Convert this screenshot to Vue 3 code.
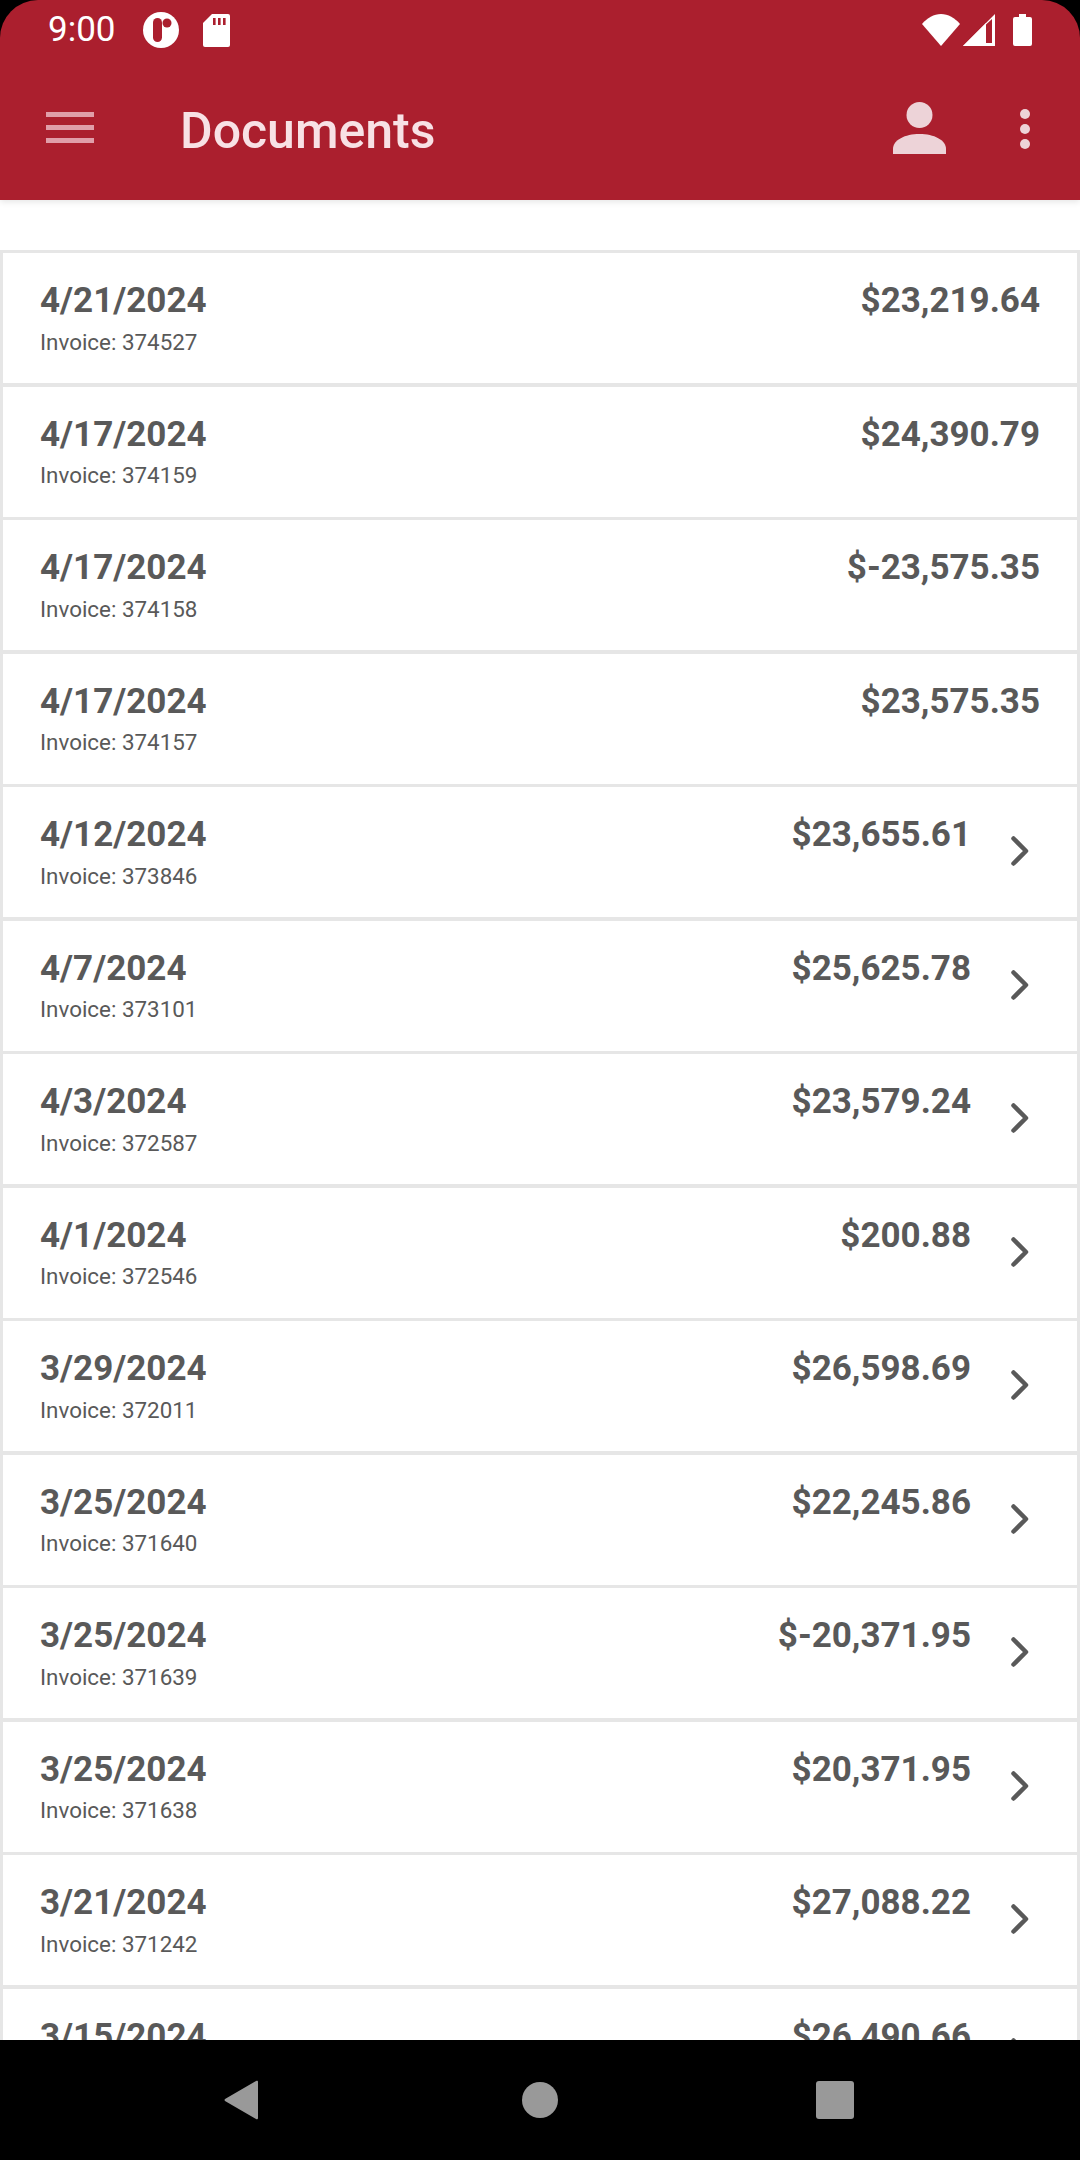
<script setup>
const rows = [
  { date: '4/21/2024', invoice: '374527', amount: '$23,219.64', open: false },
  { date: '4/17/2024', invoice: '374159', amount: '$24,390.79', open: false },
  { date: '4/17/2024', invoice: '374158', amount: '$-23,575.35', open: false },
  { date: '4/17/2024', invoice: '374157', amount: '$23,575.35', open: false },
  { date: '4/12/2024', invoice: '373846', amount: '$23,655.61', open: true },
  { date: '4/7/2024', invoice: '373101', amount: '$25,625.78', open: true },
  { date: '4/3/2024', invoice: '372587', amount: '$23,579.24', open: true },
  { date: '4/1/2024', invoice: '372546', amount: '$200.88', open: true },
  { date: '3/29/2024', invoice: '372011', amount: '$26,598.69', open: true },
  { date: '3/25/2024', invoice: '371640', amount: '$22,245.86', open: true },
  { date: '3/25/2024', invoice: '371639', amount: '$-20,371.95', open: true },
  { date: '3/25/2024', invoice: '371638', amount: '$20,371.95', open: true },
  { date: '3/21/2024', invoice: '371242', amount: '$27,088.22', open: true },
  { date: '3/15/2024', invoice: '370811', amount: '$26,490.66', open: true }
]
</script>

<template>
  <div class="screen">
    <header class="head">
      <div class="status">
        <span class="time">9:00</span>
        <svg class="st-app" viewBox="0 0 36 36">
          <circle cx="18" cy="18" r="18" fill="#fff" />
          <rect x="10" y="6" width="9" height="24" rx="4.500" fill="#ab1f2e" />
          <circle cx="24" cy="11" r="4.500" fill="#ab1f2e" />
        </svg>
        <svg class="st-sd" viewBox="0 0 27 33">
          <path d="M9 0h16a2 2 0 0 1 2 2v29a2 2 0 0 1-2 2H2a2 2 0 0 1-2-2V9z" fill="#fff" />
          <rect x="10" y="4" width="2.600" height="7" fill="#ab1f2e" />
          <rect x="15" y="4" width="2.600" height="7" fill="#ab1f2e" />
          <rect x="20" y="4" width="2.600" height="7" fill="#ab1f2e" />
        </svg>
        <span class="grow"></span>
        <svg class="st-wifi" viewBox="0 0 38 32">
          <path d="M0 10C5 4 12 0 19 0s14 4 19 10L19 32z" fill="#fff" />
        </svg>
        <svg class="st-signal" viewBox="0 0 32 32">
          <path d="M0 32 32 0v32z" fill="#fff" />
          <path d="M23 10.500 29 5v24h-6z" fill="#ab1f2e" />
          <path d="M0 32 23 9v23z" fill="#fff" />
        </svg>
        <svg class="st-batt" viewBox="0 0 19 32">
          <path d="M6 0h7v3h4a2 2 0 0 1 2 2v25a2 2 0 0 1-2 2H2a2 2 0 0 1-2-2V5a2 2 0 0 1 2-2h4z" fill="#fff" />
        </svg>
      </div>
      <div class="bar">
        <div class="burger"><i></i><i></i><i></i></div>
        <h1 class="title">Documents</h1>
        <svg class="person" viewBox="0 0 53 52">
          <circle cx="26.500" cy="13" r="13" fill="#edd3d8" />
          <path d="M0 52v-5C0 38 12 32 26.500 32S53 38 53 47v5z" fill="#edd3d8" />
        </svg>
        <div class="dots"><i></i><i></i><i></i></div>
      </div>
    </header>

    <main class="list">
      <div class="cards">
        <article v-for="row in rows" :key="row.invoice" class="row">
          <div class="left">
            <div class="date">{{ row.date }}</div>
            <div class="invoice">Invoice: {{ row.invoice }}</div>
          </div>
          <div class="amount">{{ row.amount }}</div>
          <svg v-if="row.open" class="chev" viewBox="0 0 18 30">
            <path d="M2.500 2.500 15 15 2.500 27.500" fill="none" stroke="#595959" stroke-width="4.500" stroke-linecap="round" stroke-linejoin="round" />
          </svg>
        </article>
      </div>
    </main>

    <nav class="nav">
      <svg class="n-back" viewBox="0 0 34 40">
        <path d="M32 1 1 19a1.500 1.500 0 0 0 0 2l31 18a1.200 1.200 0 0 0 2-1V2a1.200 1.200 0 0 0-2-1z" fill="#999" />
      </svg>
      <span class="n-home"></span>
      <span class="n-rec"></span>
    </nav>
  </div>
</template>

<style>
html, body { margin: 0; background: #000; }
</style>

<style scoped>
.screen {
  width: 1080px;
  height: 2160px;
  display: flex;
  flex-direction: column;
  background: #000;
  overflow: hidden;
  font-family: Roboto, "Liberation Sans", sans-serif;
}
.head {
  flex: none;
  height: 200px;
  background: #ab1f2e;
  border-radius: 38px 38px 0 0;
  position: relative;
  z-index: 1;
  box-shadow: 0 2px 6px rgba(0, 0, 0, 0.1);
}
.status {
  height: 60px;
  display: flex;
  align-items: center;
  padding: 0 48px;
  color: #fff;
}
.time { font-size: 35px; line-height: 62px; width: 95px; }
.st-app { width: 36px; height: 36px; margin-right: 24px; }
.st-sd { width: 27px; height: 33px; }
.grow { flex: 1; }
.st-wifi { width: 38px; height: 32px; margin-right: 3px; }
.st-signal { width: 32px; height: 32px; margin-right: 18px; }
.st-batt { width: 19px; height: 32px; }
.bar {
  height: 140px;
  display: flex;
  align-items: center;
  padding-left: 46px;
}
.burger {
  width: 48px;
  display: flex;
  flex-direction: column;
  gap: 8px;
  margin-top: -6px;
}
.burger i { display: block; height: 5px; background: #e09ea9; }
.title {
  margin: 2px 0 0 86px;
  font-size: 50px;
  font-weight: 500;
  color: #f8e1e5;
  flex: 1;
}
.person { width: 53px; height: 52px; margin-top: -4px; margin-right: 74px; }
.dots {
  width: 10px;
  display: flex;
  flex-direction: column;
  gap: 5px;
  margin-top: -2px;
  margin-right: 50px;
}
.dots i { display: block; width: 10px; height: 10px; border-radius: 50%; background: #edd3d8; }
.list {
  flex: 1;
  min-height: 0;
  overflow: hidden;
  background: #fff;
  padding-top: 50px;
}
.cards {
  display: flex;
  flex-direction: column;
  gap: 3.500px;
  padding: 3px;
  background: #e6e6e6;
}
.row {
  flex: none;
  height: 130px;
  box-sizing: border-box;
  background: #fff;
  display: flex;
  padding: 0 37px;
  color: #595959;
}
.left { flex: 1; }
.date {
  font-size: 35px;
  font-weight: 700;
  line-height: 40px;
  margin-top: 28px;
}
.invoice {
  font-size: 22.400px;
  line-height: 26px;
  margin-top: 7.500px;
}
.amount {
  font-size: 35px;
  font-weight: 700;
  line-height: 40px;
  margin-top: 28px;
}
.chev {
  width: 18px;
  height: 30px;
  margin: 49px 11px 0 40px;
}
.nav {
  flex: none;
  height: 120px;
  background: #000;
  position: relative;
  z-index: 1;
}
.n-back, .n-home, .n-rec { position: absolute; display: block; }
.n-back { left: 224px; top: 40px; width: 34px; height: 40px; }
.n-home { left: 522px; top: 42px; width: 36px; height: 36px; border-radius: 50%; background: #999; }
.n-rec { left: 816px; top: 41px; width: 38px; height: 38px; border-radius: 3px; background: #999; }
</style>
